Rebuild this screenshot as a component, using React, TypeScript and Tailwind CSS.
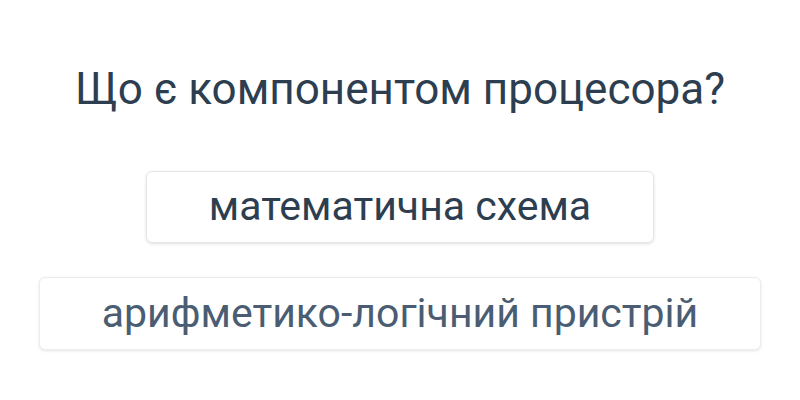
export default function App() {
  return (
    <div className="w-[800px] h-[400px] bg-white flex flex-col items-center" style={{ fontFamily: "Roboto, 'Noto Sans', sans-serif" }}>
      <h1 className="mt-[63px] text-[44px] leading-[52px] text-[#2c3e50] font-normal">Що є компонентом процесора?</h1>
      <div className="mt-[56px] flex flex-col items-center gap-[34px]">
        <button className="w-[508px] h-[72px] rounded-[6px] border border-[#e6e6e6] bg-white shadow-[0_1px_3px_rgba(0,0,0,0.12)] text-[41px] text-[#2c3e50] flex items-center justify-center">
          математична схема
        </button>
        <button className="w-[722px] h-[73px] rounded-[6px] border border-[#ececec] bg-white shadow-[0_1px_3px_rgba(0,0,0,0.10)] text-[41px] text-[#4a5d72] flex items-center justify-center">
          арифметико-логічний пристрій
        </button>
      </div>
    </div>
  );
}
